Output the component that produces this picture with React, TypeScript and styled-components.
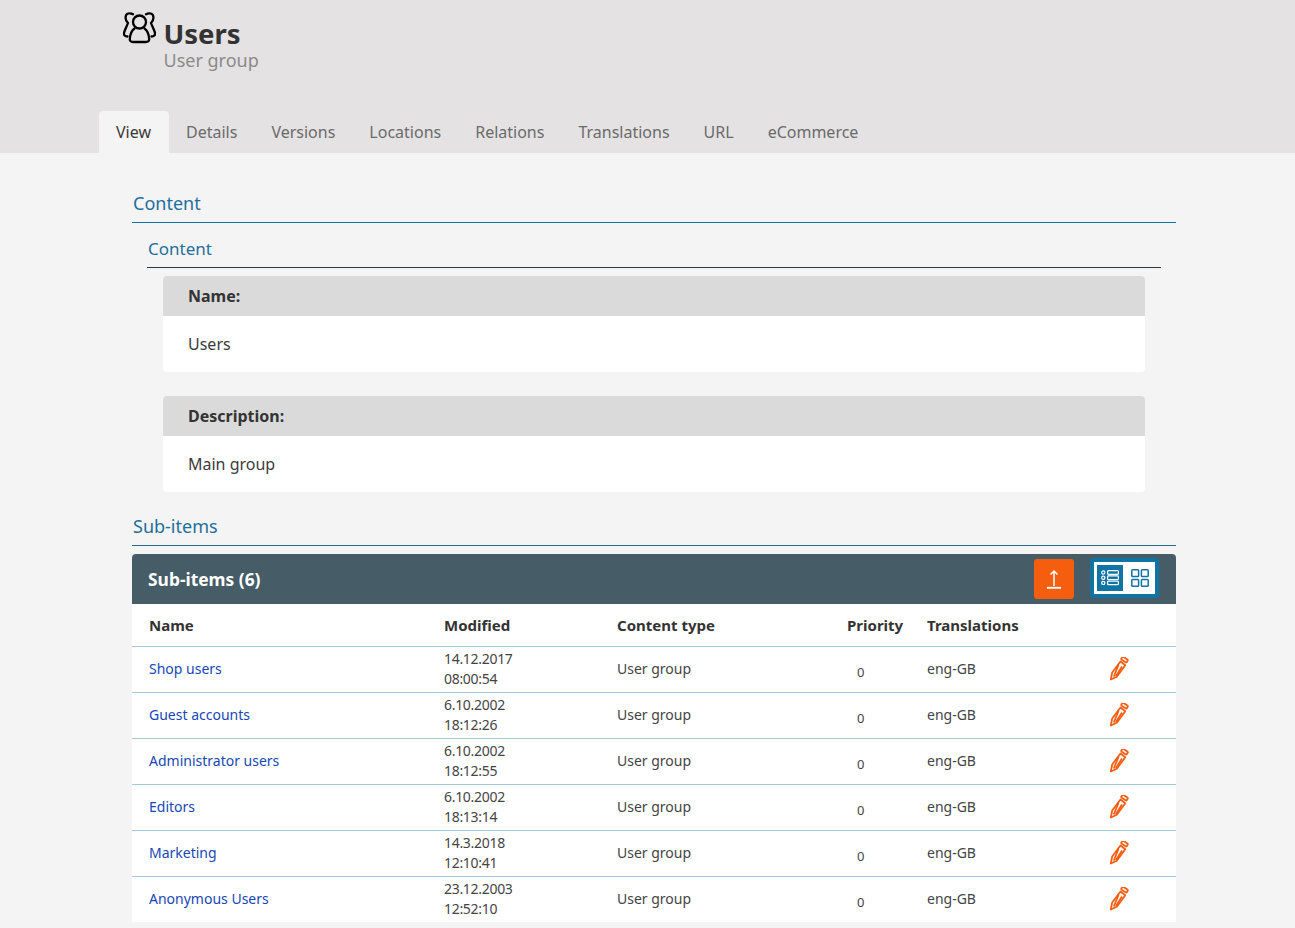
import React from "react";
import styled, { createGlobalStyle } from "styled-components";

const Global = createGlobalStyle`
  html, body { margin: 0; padding: 0; background: #f4f4f4; height: 928px; overflow: hidden; }
  body { font-family: "Noto Sans", sans-serif; color: #333; }
  * { box-sizing: border-box; }
`;
const Page = styled.div`width: 1295px; height: 928px; overflow: hidden;`;
const Header = styled.header`
  height: 153px; background: #e4e2e3; display: flex; flex-direction: column; justify-content: space-between;
  padding: 12px 0 0 99px;
`;
const TitleRow = styled.div`display: flex; padding-left: 24px; gap: 7.5px;`;
const TitleText = styled.div`display: flex; flex-direction: column; padding-top: 6px;`;
const Title = styled.h1`margin: 0; font-size: 27.5px; line-height: 32px; font-weight: 700; color: #333;`;
const Subtitle = styled.div`font-size: 18px; line-height: 20px; color: #8b8b8b;`;
const Tabs = styled.nav`display: flex; height: 42px;`;
const Tab = styled.a<{ $active?: boolean }>`
  padding: ${p => (p.$active ? "0 18px 0 17px" : "0 17px")}; font-size: 16px; line-height: 42px; color: ${p => (p.$active ? "#3a3a3a" : "#6b6b6b")};
  background: ${p => (p.$active ? "#f4f4f4" : "transparent")}; border-radius: 4px 4px 0 0;
`;
const Main = styled.main`padding: 27px 119px 0 132px;`;
const SectionHead = styled.h2`
  margin: 0; font-weight: 400; font-size: 18px; line-height: 38px; height: 43px; padding: 4px 0 0 1px; color: #1e6f9c;
  border-bottom: 1px solid #0f74a3;
`;
const Group = styled.section`padding: 0 15px; margin-top: 5px;`;
const GroupHead = styled.h3`
  margin: 0; font-weight: 400; font-size: 17px; line-height: 34px; height: 40px; padding: 4px 0 0 1px; color: #1e6f9c; border-bottom: 1px solid #2b3a42;
`;
const Fields = styled.div`display: flex; flex-direction: column; gap: 24px; padding: 8px 16px 0;`;
const Field = styled.div`background: #fff; border-radius: 4px; overflow: hidden;`;
const FieldLabel = styled.div`background: #dadada; height: 40px; line-height: 40px; padding-left: 25px; font-size: 16px; font-weight: 700;`;
const FieldValue = styled.div`height: 56px; line-height: 56px; padding-left: 25px; font-size: 16px; color: #3b3b3b;`;
const SubHead = styled(SectionHead)`height: 33px; line-height: 27px; margin-top: 21px; padding-top: 0; border-bottom-color: #2a6b8c;`;
const Panel = styled.div`margin-top: 8px; background: #fff;`;
const PanelBar = styled.div`
  height: 50px; background: #465c67; border-radius: 4px 4px 0 0; display: flex; align-items: center; justify-content: space-between;
  padding: 0 17px 0 16px; color: #fff; font-size: 17.4px; font-weight: 700;
`;
const Tools = styled.div`display: flex; align-items: center; gap: 16px;`;
const Upload = styled.button`
  width: 40px; height: 40px; border: 0; padding: 0; border-radius: 3px; background: #f55d0f; display: flex; align-items: center; justify-content: center;
`;
const Switcher = styled.div`
  width: 69px; height: 40px; margin-top: -2px; border: 4px solid #0f74a3; border-radius: 4px; background: #fff; display: flex; padding: 3px;
`;
const View = styled.div<{ $on?: boolean }>`
  flex: none; width: 26px; height: 26px; display: flex; align-items: center; justify-content: center;
  background: ${p => (p.$on ? "#0f74a3" : "#fff")}; margin-right: 4px;
`;
const Row = styled.div<{ $head?: boolean }>`
  display: grid; grid-template-columns: 295px 173px 230px 80px 183px 1fr; padding: ${p => (p.$head ? "0 0 0 17px" : "0 0 2px 17px")}; align-items: center;
  height: ${p => (p.$head ? "43px" : "46px")}; border-bottom: 1px solid #a3c8d8; font-size: 14px; color: #444;
  &:last-child { border-bottom: 0; height: 45px; }
`;
const HeadCell = styled.div`font-size: 15px; font-weight: 700; color: #333;`;
const LinkCell = styled.a`color: #1747b5; font-size: 14px;`;
const DateCell = styled.div`font-size: 14px; letter-spacing: -0.3px; line-height: 20px;`;
const PriorityCell = styled.div`padding-left: 10px; margin-top: 7px; font-size: 13px;`;
const EditCell = styled.div`display: flex; margin-left: -1px;`;

const UsersIcon = () => (
  <svg width="33" height="32" viewBox="0 0 33 32" fill="none" stroke="#000" strokeWidth="2.3" strokeLinejoin="round" strokeLinecap="round">
    <circle cx="16.5" cy="10" r="6.500" />
    <path d="M11.500 16.500C8 19 7 24 6.800 27c-.1 2 1.200 3 3.200 3h13c2 0 3.300-1 3.200-3-.2-3-1.200-8-4.700-10.500" />
    <path d="M10 2.200C7 .6 3 1 2.600 5 2.300 8 3.500 9.500 5 11c-1 3-3 6-4 10-.4 2 1 3.500 3.500 3.500" />
    <path d="M23 2.200C26 .6 30 1 30.400 5c.3 3-.9 4.500-2.400 6 1 3 3 6 4 10 .4 2-1 3.500-3.500 3.500" />
  </svg>
);
const UploadIcon = () => (
  <svg width="16" height="20" viewBox="0 0 16 20" fill="none" stroke="#fff" strokeWidth="1.500">
    <path d="M8 17V2M4.500 5.500 8 2l3.500 3.500" />
    <path d="M1 18.800h14" strokeWidth="1.900" />
  </svg>
);
const ListIcon = () => (
  <svg width="18" height="16" viewBox="0 0 18 16" fill="none" stroke="#fff" strokeWidth="1.200">
    {[.7, 5.900, 11.100].map(y => (
      <g key={y}>
        <circle cx="2.300" cy={y + 1.800} r="1.600" />
        <rect x="6.600" y={y} width="10.800" height="3.600" rx=".8" />
      </g>
    ))}
  </svg>
);
const GridIcon = () => (
  <svg width="18" height="18" viewBox="0 0 18 18" fill="none" stroke="#0f74a3" strokeWidth="1.500">
    <rect x=".8" y=".8" width="6.800" height="6.800" rx=".8" />
    <rect x="10.400" y=".8" width="6.800" height="6.800" rx=".8" />
    <rect x=".8" y="10.400" width="6.800" height="6.800" rx=".8" />
    <rect x="10.400" y="10.400" width="6.800" height="6.800" rx=".8" />
  </svg>
);
const PencilIcon = () => (
  <svg width="20" height="24" viewBox="0 0 20 24" fill="none" stroke="#f55d0f" strokeWidth="1.800" strokeLinejoin="round">
    <path d="M11.500 4.500 3.200 15.500 1.800 22.500l6-2.800 8.500-11.500z" />
    <path d="M9.500 8 4.800 19.500M13 9.500 7 19" />
    <rect x="12.300" y=".9" width="6.500" height="3.400" rx="1" transform="rotate(33 15.500 2.600)" />
  </svg>
);

const items = [
  ["Shop users", "14.12.2017", "08:00:54"],
  ["Guest accounts", "6.10.2002", "18:12:26"],
  ["Administrator users", "6.10.2002", "18:12:55"],
  ["Editors", "6.10.2002", "18:13:14"],
  ["Marketing", "14.3.2018", "12:10:41"],
  ["Anonymous Users", "23.12.2003", "12:52:10"],
];
const tabs = ["View", "Details", "Versions", "Locations", "Relations", "Translations", "URL", "eCommerce"];

export default function App() {
  return (
    <Page>
      <Global />
      <Header>
        <TitleRow>
          <UsersIcon />
          <TitleText>
            <Title>Users</Title>
            <Subtitle>User group</Subtitle>
          </TitleText>
        </TitleRow>
        <Tabs>
          {tabs.map((t, i) => (
            <Tab key={t} $active={i === 0}>{t}</Tab>
          ))}
        </Tabs>
      </Header>
      <Main>
        <SectionHead>Content</SectionHead>
        <Group>
          <GroupHead>Content</GroupHead>
          <Fields>
            <Field>
              <FieldLabel>Name:</FieldLabel>
              <FieldValue>Users</FieldValue>
            </Field>
            <Field>
              <FieldLabel>Description:</FieldLabel>
              <FieldValue>Main group</FieldValue>
            </Field>
          </Fields>
        </Group>
        <SubHead>Sub-items</SubHead>
        <Panel>
          <PanelBar>
            <span>Sub-items (6)</span>
            <Tools>
              <Upload aria-label="Upload"><UploadIcon /></Upload>
              <Switcher>
                <View $on><ListIcon /></View>
                <View><GridIcon /></View>
              </Switcher>
            </Tools>
          </PanelBar>
          <Row $head>
            <HeadCell>Name</HeadCell>
            <HeadCell>Modified</HeadCell>
            <HeadCell>Content type</HeadCell>
            <HeadCell>Priority</HeadCell>
            <HeadCell>Translations</HeadCell>
            <div />
          </Row>
          {items.map(([n, d, t]) => (
            <Row key={n}>
              <LinkCell>{n}</LinkCell>
              <DateCell>{d}<br />{t}</DateCell>
              <div>User group</div>
              <PriorityCell>0</PriorityCell>
              <div>eng-GB</div>
              <EditCell><PencilIcon /></EditCell>
            </Row>
          ))}
        </Panel>
      </Main>
    </Page>
  );
}
